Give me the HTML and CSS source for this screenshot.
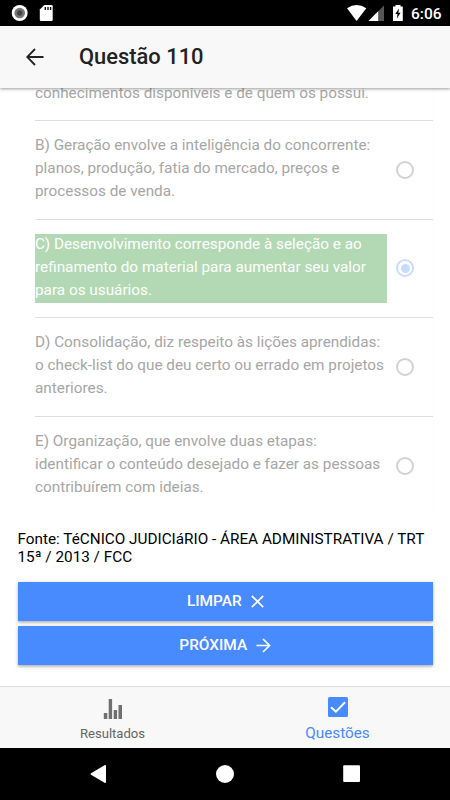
FILE: index.html
```html
<!DOCTYPE html>
<html lang="pt-BR">
<head>
    <meta charset="UTF-8">
    <meta name="viewport" content="width=device-width, initial-scale=1.0">
    <title>Questão 110</title>
    <link rel="stylesheet" href="styles.css">
</head>
<body>
    <div class="status-bar">
        <svg class="status-left" width="60" height="26" viewBox="0 0 60 26">
            <circle cx="19.7" cy="13" r="8" fill="#fff"/>
            <circle cx="19.7" cy="13" r="5.3" fill="#777"/>
            <circle cx="19.7" cy="13" r="2.7" fill="#444"/>
            <path d="M44.3 5H51.4Q52.7 5 52.7 6.3V19.7Q52.7 21 51.4 21H41.1Q39.8 21 39.8 19.7V9.5Z" fill="#fff"/>
            <path d="M45.3 7v3M48 7v3M50.6 7v3" stroke="#111" stroke-width="1.4"/>
        </svg>
        <svg width="66" height="26" viewBox="0 0 66 26">
            <path d="M2 8.2Q11.6 1.8 21.3 8.2L11.6 21Z" fill="#fff"/>
            <path d="M39 5.5V21H23.5Z" fill="#555"/>
            <path d="M33.2 11.3V21H23.5Z" fill="#fff"/>
            <path d="M50.5 5h5v1.6h2.3V21H48V6.6h2.5Z" fill="#fff"/>
            <path d="M54 8.5L50.3 14h2.2l-.6 4.5 3.7-5.8h-2.2Z" fill="#000"/>
        </svg>
        <span class="clock">6:06</span>
    </div>

    <header>
        <svg width="18" height="18" viewBox="0 0 18 18">
            <path d="M17.5 9H1.3M9 1L1.2 9L9 17" fill="none" stroke="#222" stroke-width="1.8"/>
        </svg>
        <h1>Questão 110</h1>
    </header>

    <main>
        <div class="options">
            <div class="option first">
                <p>conhecimentos disponíveis e de quem os possui.</p>
            </div>
            <div class="option">
                <p>B) Geração envolve a inteligência do concorrente:<br>planos, produção, fatia do mercado, preços e<br>processos de venda.</p>
                <span class="radio"></span>
            </div>
            <div class="option">
                <p class="correct">C) Desenvolvimento corresponde à seleção e ao<br>refinamento do material para aumentar seu valor<br>para os usuários.</p>
                <span class="radio checked"></span>
            </div>
            <div class="option">
                <p>D) Consolidação, diz respeito às lições aprendidas:<br>o check-list do que deu certo ou errado em projetos<br>anteriores.</p>
                <span class="radio"></span>
            </div>
            <div class="option">
                <p>E) Organização, que envolve duas etapas:<br>identificar o conteúdo desejado e fazer as pessoas<br>contribuírem com ideias.</p>
                <span class="radio"></span>
            </div>
        </div>
        <p class="source">Fonte: TéCNICO JUDICIáRIO - ÁREA ADMINISTRATIVA / TRT<br>15ª / 2013 / FCC</p>
        <div class="actions">
            <button>LIMPAR
                <svg width="13" height="13" viewBox="0 0 13 13"><path d="M.8.8l11.4 11.4M12.2.8L.8 12.2" fill="none" stroke="#fff" stroke-width="1.7"/></svg>
            </button>
            <button>PRÓXIMA
                <svg width="15" height="15" viewBox="0 0 15 15"><path d="M.5 7.5h13M7 1l6.6 6.5L7 14" fill="none" stroke="#fff" stroke-width="1.7"/></svg>
            </button>
        </div>
    </main>

    <nav class="tabs">
        <a class="tab">
            <svg width="20" height="20" viewBox="0 0 20 20" fill="#707070">
                <path d="M.8 14h3.5v6H.8zM5.7 0h3.4v20H5.7zM10.7 11h3.4v9h-3.4zM15.5 6H19v14h-3.5z"/>
            </svg>
            <span>Resultados</span>
        </a>
        <a class="tab active">
            <svg width="20" height="20" viewBox="0 0 20 20">
                <rect width="20" height="20" rx="1.5" fill="#488aff"/>
                <path d="M3 10.2l4.9 4.5L17 5.2" fill="none" stroke="#fff" stroke-width="2"/>
            </svg>
            <span>Questões</span>
        </a>
    </nav>

    <div class="system-nav">
        <svg width="450" height="52" viewBox="0 0 450 52" fill="#fff">
            <path d="M91 25.3L104.5 17.2Q106 16.5 106 18V34Q106 35.5 104.5 34.7L91 26.7Q90 26 91 25.3Z"/>
            <circle cx="225" cy="26" r="9"/>
            <rect x="343.2" y="17.3" width="16.8" height="16.8" rx="1"/>
        </svg>
    </div>
</body>
</html>
```
FILE: styles.css
```css
* {
    box-sizing: border-box;
}
body {
    font-family: Roboto, sans-serif;
    margin: 0;
    height: 800px;
    display: flex;
    flex-direction: column;
    overflow: hidden;
    background: #fff;
    color: #000;
}
svg {
    display: block;
    flex-shrink: 0;
}
p, h1 {
    margin: 0;
}
.status-bar {
    height: 26px;
    flex-shrink: 0;
    background: #000;
    color: #fff;
    display: flex;
    align-items: center;
    padding-right: 9px;
}
.status-left {
    margin-right: auto;
}
.clock {
    width: 30px;
    padding-top: 2px;
    font-size: 15.5px;
    font-weight: 500;
    line-height: 20px;
    white-space: nowrap;
}
header {
    height: 62px;
    flex-shrink: 0;
    display: flex;
    align-items: center;
    gap: 35px;
    padding: 0 26px;
    background: #f8f8f8;
    box-shadow: 0 1px 3px rgba(0, 0, 0, 0.4);
    z-index: 1;
}
header h1 {
    padding-bottom: 1px;
    font-size: 21.9px;
    font-weight: 500;
    color: #222;
}
main {
    height: 598px;
    flex-shrink: 0;
    overflow: hidden;
}
.options {
    margin-right: 16px;
    padding-left: 35px;
    border-right: 1px solid #fcfcfc;
}
.option {
    height: 98.5px;
    display: flex;
    align-items: center;
    border-bottom: 1px solid #dedede;
}
.option.first {
    height: 33px;
    padding-bottom: 14px;
    align-items: flex-end;
}
.option:last-child {
    border-bottom: none;
}
.option p {
    display: flow-root;
    width: 352px;
    height: 69px;
    font-size: 15.3px;
    line-height: 23px;
    color: #a6a6a6;
    white-space: nowrap;
}
.option.first p {
    height: 23px;
}
.option p::before {
    content: "";
    display: block;
    margin-top: -1px;
}
.option .correct {
    background: #b2d9b3;
    color: #fff;
}
.radio {
    width: 18px;
    height: 18px;
    margin-left: 9px;
    border: 2px solid #d2d2d2;
    border-radius: 50%;
}
.radio.checked {
    border-color: #c8dcff;
    padding: 2.5px;
    background: #c8dcff content-box;
}
.source {
    padding: 15px 0 0 17.5px;
    font-size: 15.3px;
    line-height: 18px;
    white-space: nowrap;
}
.actions {
    display: flex;
    flex-direction: column;
    gap: 5px;
    padding: 16px 17px 0 17.5px;
}
.actions button {
    height: 39px;
    display: flex;
    align-items: center;
    justify-content: center;
    gap: 9px;
    padding: 0 0 2px;
    border: none;
    background: #488aff;
    color: #fff;
    font-family: inherit;
    font-size: 15.4px;
    font-weight: 500;
    box-shadow: 0 2px 2px rgba(0, 0, 0, 0.14), 0 1px 4px rgba(0, 0, 0, 0.2);
}
.actions svg {
    margin-top: 1px;
}
.tabs {
    height: 62px;
    flex-shrink: 0;
    display: flex;
    background: #f8f8f8;
    border-top: 1px solid #dedede;
}
.tab {
    width: 50%;
    display: flex;
    flex-direction: column;
    align-items: center;
    gap: 7px;
    padding-top: 12px;
    font-size: 13.1px;
    line-height: 16px;
    color: #666;
}
.tab.active {
    padding-top: 9.5px;
    gap: 8.5px;
    font-size: 15.3px;
    color: #488aff;
}
.system-nav {
    height: 52px;
    flex-shrink: 0;
    background: #000;
}
```
